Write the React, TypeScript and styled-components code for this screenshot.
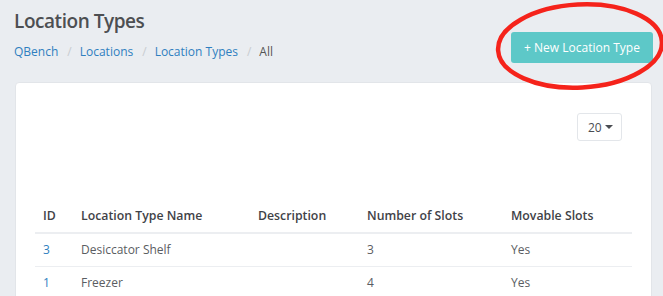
import React from "react";
import styled, { createGlobalStyle } from "styled-components";

const Global = createGlobalStyle`
  html, body { margin: 0; padding: 0; background: #eaedf1; }
  body { font-family: "Open Sans", "DejaVu Sans", sans-serif; overflow: hidden; }
`;

const Page = styled.div`
  position: relative;
  width: 663px;
  height: 296px;
  padding: 0 11px 0 14px;
  box-sizing: border-box;
  overflow: hidden;
`;

const Header = styled.div`
  display: flex;
  justify-content: space-between;
  align-items: flex-start;
  height: 82px;
`;

const TitleBlock = styled.div`
  display: flex;
  flex-direction: column;
`;

const Title = styled.h1`
  margin: 7px 0 0 0;
  font-size: 19px;
  line-height: 28px;
  font-weight: 600;
  letter-spacing: -0.45px;
  color: #4d4f52;
`;

const Crumbs = styled.nav`
  display: flex;
  align-items: center;
  margin-top: 8px;
  font-size: 12px;
  line-height: 18px;
`;

const Crumb = styled.span<{ $active?: boolean }>`
  color: ${(p) => (p.$active ? "#555" : "#2f7fc0")};
`;

const Sep = styled.span`
  color: #c8ccd0;
  padding: 0 8px 0 9px;
`;

const NewButton = styled.button`
  margin-top: 32px;
  margin-right: -1px;
  width: 142px;
  height: 31px;
  border: none;
  border-radius: 3px;
  background: #5dc8c8;
  color: #ffffff;
  font-family: "Open Sans", sans-serif;
  font-size: 12px;
  font-weight: 400;
  padding: 0 0 1px 0;
`;

const Card = styled.div`
  background: #ffffff;
  border: 1px solid #e2e5e9;
  border-radius: 4px;
  margin-left: 1px;
  padding: 30px 19px 0 19px;
  height: 300px;
  box-sizing: border-box;
`;

const Toolbar = styled.div`
  display: flex;
  justify-content: flex-end;
  padding-right: 10px;
`;

const PageSize = styled.div`
  display: flex;
  align-items: center;
  gap: 3px;
  width: 45px;
  height: 28px;
  box-sizing: border-box;
  padding-left: 10px;
  border: 1px solid #e3e6ea;
  border-radius: 3px;
  color: #4a4d52;
  font-size: 12px;
`;

const Caret = styled.span`
  width: 0;
  height: 0;
  border-left: 4px solid transparent;
  border-right: 4px solid transparent;
  border-top: 4px solid #4a4d52;
`;

const Table = styled.table`
  margin-top: 58px;
  width: 597px;
  border-collapse: collapse;
  table-layout: fixed;
  font-size: 12px;
  line-height: 18px;
`;

const Th = styled.th`
  text-align: left;
  font-weight: 600;
  font-size: 12.3px;
  color: #3f4247;
  padding: 8px 8px 7px 8px;
  border-bottom: 2px solid #eceef1;
`;

const Td = styled.td<{ $link?: boolean }>`
  color: ${(p) => (p.$link ? "#2f7fc0" : "#5a5d62")};
  padding: 7px 8px 7px 8px;
  border-top: 1px solid #eceef1;
`;

const Circle = styled.svg`
  position: absolute;
  left: 490px;
  top: 0;
  pointer-events: none;
`;

const rows = [
  { id: "3", name: "Desiccator Shelf", desc: "", slots: "3", movable: "Yes" },
  { id: "1", name: "Freezer", desc: "", slots: "4", movable: "Yes" },
];

export default function App() {
  return (
    <>
      <Global />
      <Page>
        <Header>
          <TitleBlock>
            <Title>Location Types</Title>
            <Crumbs>
              <Crumb>QBench</Crumb>
              <Sep>/</Sep>
              <Crumb>Locations</Crumb>
              <Sep>/</Sep>
              <Crumb>Location Types</Crumb>
              <Sep>/</Sep>
              <Crumb $active>All</Crumb>
            </Crumbs>
          </TitleBlock>
          <NewButton>+ New Location Type</NewButton>
        </Header>
        <Card>
          <Toolbar>
            <PageSize>
              20
              <Caret />
            </PageSize>
          </Toolbar>
          <Table>
            <colgroup>
              <col style={{ width: 38 }} />
              <col style={{ width: 177 }} />
              <col style={{ width: 109 }} />
              <col style={{ width: 144 }} />
              <col style={{ width: 129 }} />
            </colgroup>
            <thead>
              <tr>
                <Th>ID</Th>
                <Th>Location Type Name</Th>
                <Th>Description</Th>
                <Th>Number of Slots</Th>
                <Th>Movable Slots</Th>
              </tr>
            </thead>
            <tbody>
              {rows.map((r) => (
                <tr key={r.id}>
                  <Td $link>{r.id}</Td>
                  <Td>{r.name}</Td>
                  <Td>{r.desc}</Td>
                  <Td>{r.slots}</Td>
                  <Td>{r.movable}</Td>
                </tr>
              ))}
            </tbody>
          </Table>
        </Card>
        <Circle width="173" height="96" viewBox="0 0 173 96">
          <ellipse
            cx="90"
            cy="46"
            rx="82"
            ry="41.5"
            fill="none"
            stroke="#f5231b"
            strokeWidth="4.5"
            transform="rotate(-3 90 46)"
          />
        </Circle>
      </Page>
    </>
  );
}
